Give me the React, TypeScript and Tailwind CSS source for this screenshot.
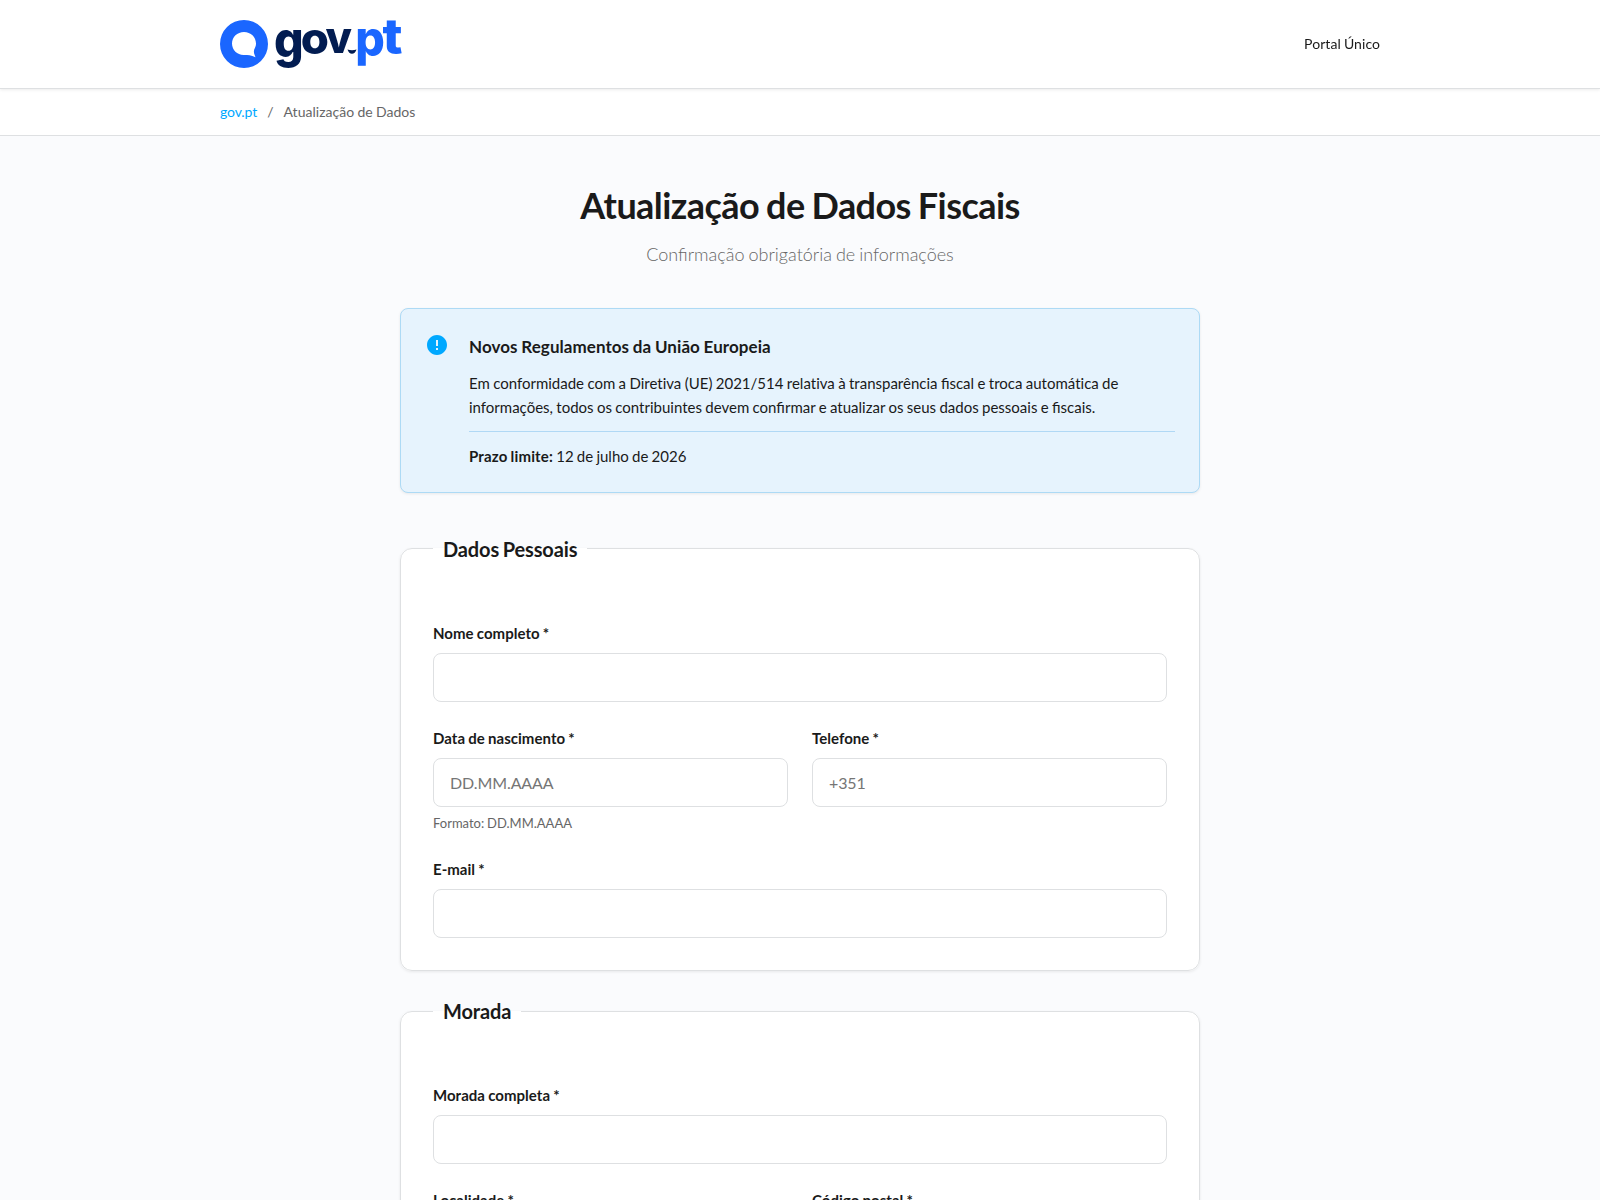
import type { ReactNode } from "react";

function Logo() {
  return (
    <svg width="186" height="76" viewBox="0 -12 186 76" aria-label="gov.pt">
      <path
        fill="#1a66ff"
        fillRule="evenodd"
        d="M24 2a24 24 0 1 0 0 48a24 24 0 1 0 0-48ZM24 14C17.200 14 12 19.100 12 25.600S17.200 37.100 23.500 37.100C27.500 37.100 30.500 37 35.500 39.300C34.500 36.500 33.300 34.500 34.200 31.500C35.300 29.500 36 28 36 25.600C36 19.100 30.800 14 24 14Z"
      />
      <g fontFamily="Inter, sans-serif" fontWeight="800" fontSize="43">
        <g fill="#021c51">
          <text transform="translate(54 38.500) scale(1.08 1.150)">g</text>
          <text transform="translate(80.800 35.700) scale(1.060 1.020)">o</text>
          <text transform="translate(105.600 35)">v</text>
        </g>
        <g fill="#1a66ff">
          <text transform="translate(135.300 38) scale(1.08 1.150)">p</text>
          <text transform="translate(162.500 35.500) scale(1.220 1.160)">t</text>
        </g>
      </g>
      <path fill="#021c51" d="M127.500 31.500c2.700 1 6.300 1 9 0c-.8 2.800-2.600 4.200-4.500 4.200s-3.700-1.400-4.500-4.200Z" />
    </svg>
  );
}

function Field({ label, placeholder, hint }: { label: string; placeholder?: string; hint?: string }) {
  return (
    <div className="mb-6">
      <label className="mb-2 block text-[15px] leading-6 font-bold tracking-[0.03px]">{label} *</label>
      <input
        type="text"
        placeholder={placeholder}
        className="block h-[49px] w-full rounded-lg border border-[#dee0e2] bg-white px-4 text-base tracking-[-0.1px] placeholder:text-[#757575]"
      />
      {hint && <div className="mt-[6px] text-[13px] leading-[20px] text-[#666]">{hint}</div>}
    </div>
  );
}

function Section({ title, children }: { title: string; children: ReactNode }) {
  return (
    <fieldset className="mb-[24.4px] rounded-xl border border-[#dee0e2] bg-white px-8 pt-14 pb-2 shadow-[0_1px_3px_rgba(0,0,0,0.08)]">
      <legend className="px-[10px] text-xl leading-8 font-bold tracking-[-0.12px] [word-spacing:-0.06em]">{title}</legend>
      {children}
    </fieldset>
  );
}

function Plain({ children }: { children: ReactNode }) {
  return <span className="[font-variant-ligatures:none]">{children}</span>;
}

export default function App() {
  return (
    <div className="h-[1200px] overflow-hidden bg-[#fafbfd] font-['Lato',sans-serif] text-[#1a1a1a] [word-spacing:-0.03em]">
      <header className="relative z-10 h-[89px] border-b border-[#dee0e2] bg-white shadow-[0_1px_3px_rgba(0,0,0,0.08)] will-change-transform">
        <div className="mx-auto flex h-full w-[1160px] items-center justify-between">
          <Logo />
          <a className="text-sm tracking-[0.06px]">Portal Único</a>
        </div>
      </header>
      <nav className="h-[47px] border-b border-[#dee0e2] bg-white">
        <div className="mx-auto flex h-full w-[1160px] items-center text-sm text-[#666]">
          <a className="tracking-[-0.1px] text-[#00a8ff]">gov.pt</a>
          <span className="mx-[10px]">/</span>
          <span className="tracking-[0.04px]">Atualização de Dados</span>
        </div>
      </nav>
      <main className="mx-auto w-[800px] pt-12">
        <div className="mb-[39px] text-center">
          <h1 className="mb-[13px] text-[36px] leading-[43px] font-bold tracking-[-0.56px] [word-spacing:-0.035em]">
            Atualização de Dados Fiscais
          </h1>
          <p className="text-lg leading-[29px] font-light text-[#666] [word-spacing:-0.05em]">Confirmação obrigatória de informações</p>
        </div>
        <section className="mb-[39.8px] flex h-[185px] rounded-lg border border-[#addaf5] bg-[#e6f3fd] p-6 shadow-[0_1px_3px_rgba(0,0,0,0.08)]">
          <svg width="24" height="24" viewBox="0 0 24 24" className="mr-5 shrink-0" fill="#00a8ff">
            <path d="M12 2C6.480 2 2 6.480 2 12s4.480 10 10 10 10-4.480 10-10S17.520 2 12 2zm1 15h-2v-2h2v2zm0-4h-2V7h2v6z" />
          </svg>
          <div className="flex-1 text-[15px] leading-6">
            <h2 className="mb-[11px] text-[17px] leading-[27px] font-bold tracking-[0.06px]">Novos Regulamentos da União Europeia</h2>
            <p>
              Em conformidade com a <Plain>Diretiva</Plain> (UE) 2021/514 <Plain>relativa</Plain> à transparência fiscal e troca{" "}
              <Plain>automática</Plain> de informações, todos os contribuintes devem confirmar e atualizar os seus dados pessoais
              e fiscais.
            </p>
            <div className="mt-3 border-t border-[#b0d8f5] pt-3 [word-spacing:-0.04em]">
              <strong className="font-bold tracking-[0.15px]">Prazo limite:</strong> 12 de julho de 2026
            </div>
          </div>
        </section>
        <Section title="Dados Pessoais">
          <Field label="Nome completo" />
          <div className="grid grid-cols-2 gap-x-6">
            <Field label="Data de nascimento" placeholder="DD.MM.AAAA" hint="Formato: DD.MM.AAAA" />
            <Field label="Telefone" placeholder="+351" />
          </div>
          <Field label="E-mail" />
        </Section>
        <Section title="Morada">
          <Field label="Morada completa" />
          <div className="grid grid-cols-2 gap-x-6">
            <Field label="Localidade" />
            <Field label="Código postal" />
          </div>
        </Section>
      </main>
    </div>
  );
}
